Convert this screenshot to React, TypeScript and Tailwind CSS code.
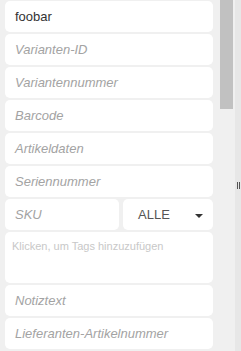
const fields = [
  "Varianten-ID",
  "Variantennummer",
  "Barcode",
  "Artikeldaten",
  "Seriennummer",
];

const Field = ({ placeholder, value }: { placeholder?: string; value?: string }) => (
  <div className="h-[31px] shrink-0 flex items-center bg-white rounded-[5px] pl-[10px] text-[13px]">
    {value ? (
      <span className="text-[#333]">{value}</span>
    ) : (
      <span className="italic text-[#a3a3a3]">{placeholder}</span>
    )}
  </div>
);

const App = () => {
  return (
    <div
      className="w-[241px] h-[351px] overflow-hidden flex bg-[#f0f0f0]"
      style={{ fontFamily: '"Liberation Sans", Arial, sans-serif' }}
    >
      {/* Filter list */}
      <div className="w-[208px] ml-[5px] pt-[1px] flex flex-col gap-[2px] shrink-0">
        <Field value="foobar" />
        {fields.map((f) => (
          <Field key={f} placeholder={f} />
        ))}
        <div className="flex gap-[4px] shrink-0">
          <div className="w-[114px] shrink-0">
            <Field placeholder="SKU" />
          </div>
          <div className="flex-1 h-[31px] flex items-center justify-between bg-white rounded-[5px] pl-[15px] pr-[10px] text-[13px] text-[#555]">
            <span className="pt-[1px]">ALLE</span>
            <span className="mt-[2px] w-0 h-0 border-l-[4px] border-r-[4px] border-t-[4px] border-l-transparent border-r-transparent border-t-[#333]" />
          </div>
        </div>
        <div className="h-[51px] shrink-0 bg-white rounded-[5px] pl-[7px] pt-[6px] text-[11px] text-[#c8c8c8]">
          Klicken, um Tags hinzuzufügen
        </div>
        <Field placeholder="Notiztext" />
        <Field placeholder="Lieferanten-Artikelnummer" />
      </div>

      {/* Scrollbar */}
      <div className="ml-[7px] w-[13px] shrink-0">
        <div className="h-[109px] bg-[#c1c1c1]" />
      </div>
      <div className="w-[2px] shrink-0" />

      {/* Splitter */}
      <div className="flex-1 bg-[#e7e7e7] flex flex-col">
        <div className="mt-[182px] ml-[2px] w-[3px] h-[7px] border-l border-r border-[#555]" />
      </div>
    </div>
  );
};

export default App;
